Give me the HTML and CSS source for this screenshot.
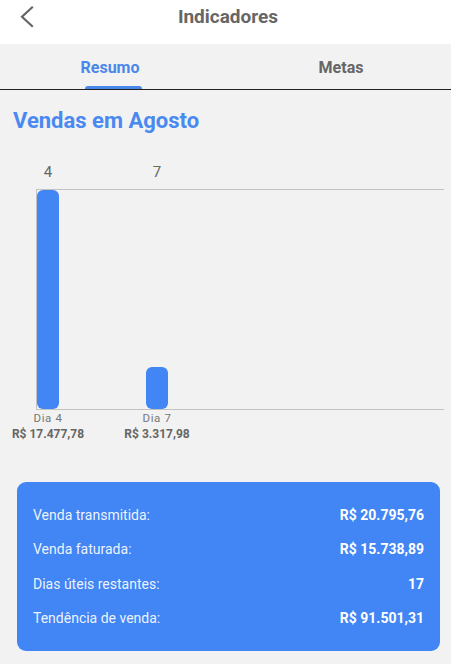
FILE: index.html
```html
<!DOCTYPE html>
<html lang="pt-BR">

<head>
    <meta charset="UTF-8">
    <meta name="viewport" content="width=device-width, initial-scale=1.0">
    <title>Indicadores</title>
    <link rel="stylesheet" href="styles.css">
</head>

<body>
    <header class="app-bar">
        <a class="back-btn" href="#">
            <svg width="24" height="24" viewBox="0 0 24 24">
                <path d="M17 2.5 L7 11.7 L17 21" fill="none" stroke="#666" stroke-width="2.2" stroke-linecap="square" />
            </svg>
        </a>
        <h1 class="app-title">Indicadores</h1>
        <span></span>
    </header>

    <nav class="tabs">
        <a class="tab active" href="#">Resumo</a>
        <a class="tab metas" href="#">Metas</a>
    </nav>

    <h2 class="section-title">Vendas em Agosto</h2>

    <div class="chart">
        <div class="chart-row values">
            <div class="col"><span>4</span></div>
            <div class="col"><span>7</span></div>
        </div>
        <div class="plot">
            <div class="col"><div class="bar" style="height: 219px"></div></div>
            <div class="col"><div class="bar" style="height: 42px"></div></div>
        </div>
        <div class="chart-row labels">
            <div class="col">
                <span class="day">Dia 4</span>
                <span class="amount">R$ 17.477,78</span>
            </div>
            <div class="col">
                <span class="day">Dia 7</span>
                <span class="amount">R$ 3.317,98</span>
            </div>
        </div>
    </div>

    <div class="summary-card">
        <div class="summary-row">
            <span class="label">Venda transmitida:</span>
            <span class="value">R$ 20.795,76</span>
        </div>
        <div class="summary-row">
            <span class="label">Venda faturada:</span>
            <span class="value">R$ 15.738,89</span>
        </div>
        <div class="summary-row">
            <span class="label">Dias úteis restantes:</span>
            <span class="value">17</span>
        </div>
        <div class="summary-row">
            <span class="label">Tendência de venda:</span>
            <span class="value">R$ 91.501,31</span>
        </div>
    </div>
</body>

</html>
```

FILE: styles.css
```css
body {
    margin: 0;
    font-family: Roboto, "Noto Sans", Arial, sans-serif;
    background-color: #f2f2f2;
    color: #666;
}

.app-bar {
    display: grid;
    grid-template-columns: 1fr auto 1fr;
    height: 44px;
    box-sizing: border-box;
    padding-top: 6px;
    background-color: #fff;
}

.back-btn {
    display: block;
    width: 24px;
    height: 24px;
    margin: -1px 0 0 15px;
}

.app-title {
    margin: 0 0 0 5px;
    font-size: 19px;
    line-height: 22px;
    font-weight: 700;
    color: #666;
}

.tabs {
    display: flex;
    height: 45px;
    border-bottom: 1px solid #222;
}

.tab {
    flex: 1;
    display: flex;
    justify-content: center;
    align-items: center;
    padding-top: 1px;
    font-size: 16px;
    font-weight: 700;
    color: #666;
    text-decoration: none;
}

.tab.metas {
    padding-left: 11px;
}

.tab.active {
    position: relative;
    color: #4a87ea;
}

.tab.active::after {
    content: "";
    position: absolute;
    bottom: 0;
    left: 85px;
    width: 57px;
    height: 3px;
    border-radius: 3px 3px 0 0;
    background-color: #4a87ea;
}

.section-title {
    margin: 18px 0 0 13px;
    font-size: 22px;
    line-height: 26px;
    font-weight: 700;
    color: #4a89f0;
}

.chart {
    margin: 30px 0 0 36px;
}

.chart-row,
.plot {
    display: flex;
    gap: 87px;
}

.col {
    width: 22px;
    display: flex;
    flex-direction: column;
    align-items: center;
    justify-content: flex-end;
}

.values {
    margin-left: 1px;
    height: 25px;
}

.values span {
    font-size: 15px;
    line-height: 16px;
    margin-bottom: 9px;
    color: #666;
}

.plot {
    width: 407px;
    height: 219px;
    border: 1px solid #c2c2c2;
    border-right: none;
    align-items: flex-end;
}

.bar {
    width: 22px;
    border-radius: 6px;
    background-color: #4285f4;
}

.labels {
    margin-left: 1px;
    align-items: flex-start;
}

.labels .col {
    justify-content: flex-start;
}

.day {
    margin-top: 1px;
    font-size: 11.5px;
    line-height: 15px;
    letter-spacing: 0.6px;
    color: #777;
    white-space: nowrap;
}

.amount {
    font-size: 12px;
    line-height: 17px;
    font-weight: 700;
    color: #666;
    white-space: nowrap;
}

.summary-card {
    margin: 39px 11px 0 17px;
    padding: 16px;
    border-radius: 9px;
    background-color: #4285f4;
}

.summary-row {
    display: flex;
    justify-content: space-between;
    align-items: center;
    height: 34.3px;
    font-size: 14px;
}

.summary-row .label {
    color: rgba(255, 255, 255, 0.92);
}

.summary-row .value {
    font-weight: 700;
    color: #fff;
}
```
